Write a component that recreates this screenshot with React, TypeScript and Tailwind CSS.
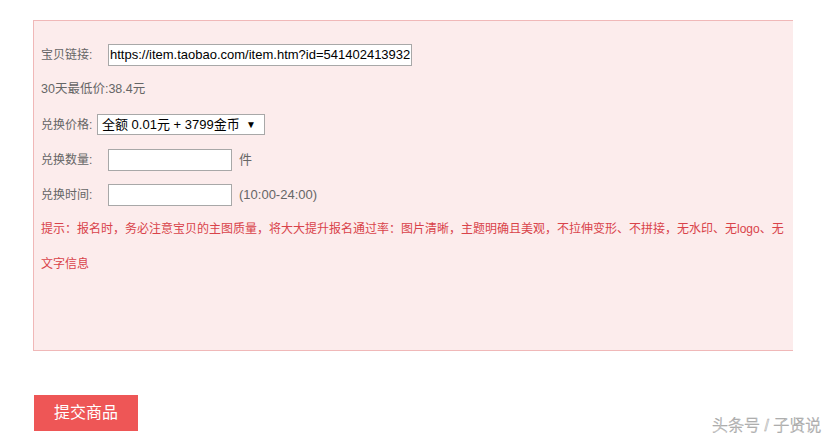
import React from "react";

const cjk = { fontFamily: '"Liberation Sans", "Noto Sans CJK SC", sans-serif' };

export default function App() {
  return (
    <div className="relative w-[839px] h-[441px] bg-white overflow-hidden" style={cjk}>
      <div className="ml-[33px] pt-[20px]">
        <div className="w-[760px] h-[331px] bg-[#fcecec] border-l border-t border-b border-[#f0b8b8] pl-[7px] pt-[16px] text-[12px] text-[#666]">
          <div className="flex items-center h-[35px]">
            <span className="w-[67px]">宝贝链接:</span>
            <div className="w-[304px] h-[22px] bg-white border border-[#a8a8a8] flex items-center pl-[1px] text-[13px] text-black whitespace-nowrap overflow-hidden">
              https://item.taobao.com/item.htm?id=541402413932
            </div>
          </div>
          <div className="flex items-center h-[35px] text-[12.5px]">30天最低价:38.4元</div>
          <div className="flex items-center h-[35px]">
            <span className="w-[56px]">兑换价格:</span>
            <div className="w-[168px] h-[21px] bg-white border border-[#a8a8a8] flex items-center justify-between pl-[4px] pr-[8px] text-[13px] text-black whitespace-nowrap">
              <span>全额 0.01元 + 3799金币</span>
              <span className="text-[10px]">▼</span>
            </div>
          </div>
          <div className="flex items-center h-[35px]">
            <span className="w-[67px]">兑换数量:</span>
            <div className="w-[124px] h-[22px] bg-white border border-[#a8a8a8]" />
            <span className="ml-[7px] text-[13px]">件</span>
          </div>
          <div className="flex items-center h-[35px]">
            <span className="w-[67px]">兑换时间:</span>
            <div className="w-[124px] h-[22px] bg-white border border-[#a8a8a8]" />
            <span className="ml-[7px] text-[13px]">(10:00-24:00)</span>
          </div>
          <div className="text-[#d9434a] leading-[35px] whitespace-nowrap">
            <div>提示：报名时，务必注意宝贝的主图质量，将大大提升报名通过率：图片清晰，主题明确且美观，不拉伸变形、不拼接，无水印、无logo、无</div>
            <div>文字信息</div>
          </div>
        </div>
      </div>
      <div className="ml-[34px] mt-[44px] w-[104px] h-[36px] bg-[#ee5656] text-white text-[16px] flex items-center justify-center">
        提交商品
      </div>
      <div className="absolute left-[712px] top-[414px] text-[16px] font-light text-[#f4f4f4] whitespace-nowrap [-webkit-text-stroke:0.5px_#a0a0a0]">
        头条号 / 子贤说
      </div>
    </div>
  );
}
